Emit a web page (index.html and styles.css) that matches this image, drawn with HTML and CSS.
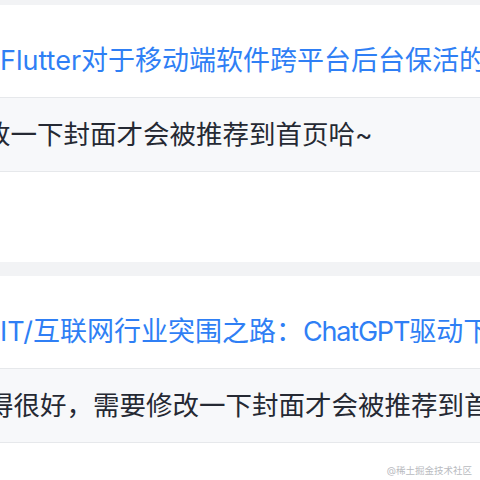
FILE: index.html
```html
<!DOCTYPE html>
<html lang="zh-CN">
<head>
<meta charset="utf-8">
<title>通知</title>
<link rel="stylesheet" href="styles.css">
</head>
<body>
<div class="feed">
  <div class="band band-top"></div>
  <section class="item">
    <div class="title">Flutter对于移动端软件跨平台后台保活的研究</div>
    <div class="comment"><span class="c-text shift-a">改一下封面才会被推荐到首页哈~</span></div>
  </section>
  <div class="band"></div>
  <section class="item">
    <div class="title">IT/互联网行业突围之路：<span class="latin">ChatGPT</span>驱动下的变革</div>
    <div class="comment"><span class="c-text shift-b">得很好，需要修改一下封面才会被推荐到首页哈~</span></div>
  </section>
  <footer class="mark">@稀土掘金技术社区</footer>
</div>
</body>
</html>
```
FILE: styles.css
```css
html, body {
  margin: 0;
  padding: 0;
  background: #ffffff;
}
body {
  width: 480px;
  height: 480px;
  overflow: hidden;
  font-family: Inter, "Noto Sans CJK SC", sans-serif;
}
.feed {
  display: flex;
  flex-direction: column;
  width: 480px;
}
.band {
  height: 14px;
  background: #f2f3f5;
}
.band-top {
  height: 5px;
}
.item {
  padding-top: 38px;
  margin-bottom: 90px;
}
.item:last-of-type {
  margin-bottom: 0;
}
.title {
  font-size: 27px;
  line-height: 36px;
  color: #2f7ff5;
  white-space: nowrap;
  overflow: hidden;
  margin-bottom: 18px;
}
.latin {
  letter-spacing: -1.2px;
}
.comment {
  background: #f7f8fa;
  border-top: 1px solid #e6e8eb;
  border-bottom: 1px solid #e6e8eb;
  padding: 18px 0;
  overflow: hidden;
}
.c-text {
  display: block;
  font-size: 26.5px;
  line-height: 37px;
  color: #252933;
  white-space: nowrap;
}
.shift-a {
  margin-left: -16px;
}
.shift-b {
  margin-left: -13px;
}
.mark {
  padding: 21px 8px 0 0;
  text-align: right;
  font-size: 9.5px;
  line-height: 14px;
  color: #b9bbbf;
}
```
